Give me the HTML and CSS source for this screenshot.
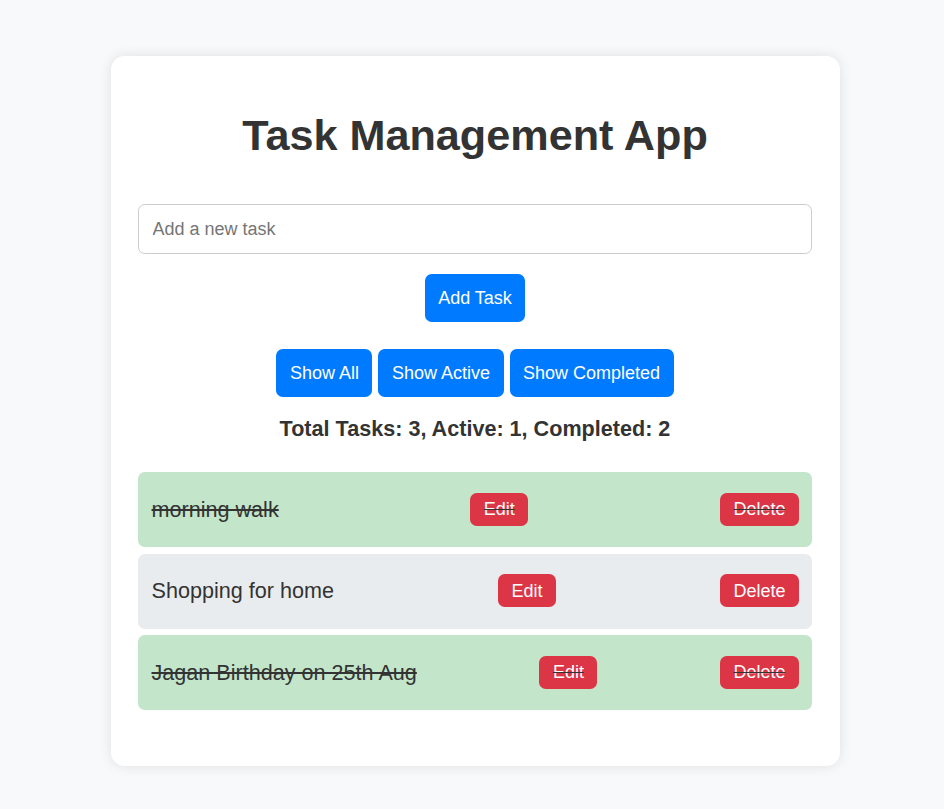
FILE: index.html
```html
<!DOCTYPE html>
<html lang="en">
<head>
<meta charset="utf-8">
<title>Task Management App</title>
<link rel="stylesheet" href="styles.css">
</head>
<body>
<div class="app">
  <h1 class="title">Task Management App</h1>
  <input class="task-input" type="text" placeholder="Add a new task">
  <div class="add-row"><button class="btn btn-primary btn-lg">Add Task</button></div>
  <div class="filters">
    <button class="btn btn-primary btn-lg">Show All</button>
    <button class="btn btn-primary btn-lg">Show Active</button>
    <button class="btn btn-primary btn-lg">Show Completed</button>
  </div>
  <p class="stats">Total Tasks: 3, Active: 1, Completed: 2</p>
  <ul class="task-list">
    <li class="task completed"><span class="task-text">morning walk</span><button class="btn btn-danger">Edit</button><button class="btn btn-danger">Delete</button></li>
    <li class="task"><span class="task-text">Shopping for home</span><button class="btn btn-danger">Edit</button><button class="btn btn-danger">Delete</button></li>
    <li class="task completed"><span class="task-text">Jagan Birthday on 25th Aug</span><button class="btn btn-danger">Edit</button><button class="btn btn-danger">Delete</button></li>
  </ul>
</div>
</body>
</html>
```
FILE: styles.css
```css
* { box-sizing: border-box; }
html, body { margin: 0; padding: 0; }
body {
  background: #f8f9fa;
  font-family: "Liberation Sans", Arial, sans-serif;
  color: #333;
  padding: 56px 0 43px 111px;
}
.app {
  width: 729px;
  background: #fff;
  border-radius: 13.5px;
  box-shadow: 0 0 13px rgba(0, 0, 0, 0.1);
  padding: 27px 28px 27px 27px;
}
.title {
  margin: 27px 0 44px;
  font-size: 43.2px;
  line-height: 50px;
  font-weight: bold;
  text-align: center;
  color: #333;
}
.task-input {
  display: block;
  width: 100%;
  height: 50px;
  padding: 0 13.5px;
  font-family: "Liberation Sans", Arial, sans-serif;
  font-size: 18px;
  color: #333;
  border: 1px solid #ccc;
  border-radius: 6.75px;
  outline: none;
  background: #fff;
}
.task-input::placeholder { color: #757575; }
.add-row {
  display: flex;
  justify-content: center;
  margin-top: 20px;
}
.filters {
  display: flex;
  justify-content: center;
  gap: 6px;
  margin-top: 27px;
}
.btn {
  font-family: "Liberation Sans", Arial, sans-serif;
  font-size: 18px;
  line-height: 20px;
  color: #fff;
  border: none;
  border-radius: 6.75px;
  cursor: pointer;
}
.btn-lg {
  padding: 14px 13.5px;
}
.btn-primary { background: #007bff; }
.btn-danger {
  background: #dc3545;
  padding: 6.5px 13.5px;
}
.stats {
  margin: 19px 0 0;
  font-size: 21.6px;
  line-height: 25px;
  font-weight: bold;
  text-align: center;
}
.task-list {
  list-style: none;
  margin: 31px 0 28.5px;
  padding: 0;
}
.task {
  display: flex;
  align-items: center;
  justify-content: space-between;
  padding: 20.5px 13px 21.5px 13.5px;
  margin-bottom: 6.5px;
  background: #e9ecef;
  border-radius: 6.75px;
  font-size: 21.6px;
  line-height: 25px;
}
.task.completed { background: #c3e6cb; }
.task.completed .task-text,
.task.completed .btn {
  text-decoration: line-through;
  text-decoration-color: #333;
}
```
